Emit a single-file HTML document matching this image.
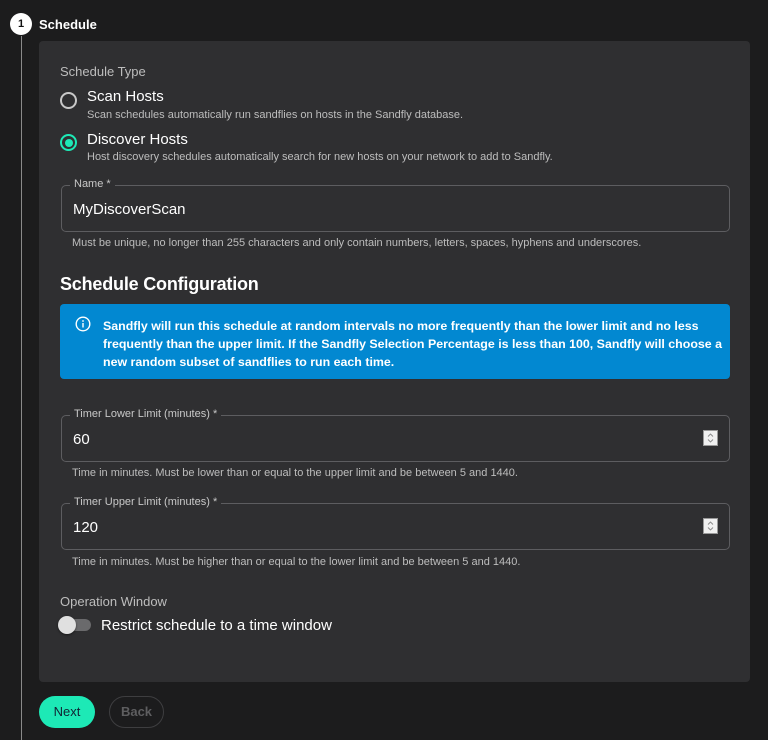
<!DOCTYPE html>
<html><head><meta charset="utf-8"><style>
*{margin:0;padding:0;box-sizing:border-box}
body{width:768px;height:740px;background:#1c1c1d;font-family:"Liberation Sans",sans-serif;color:#fff;position:relative;overflow:hidden}
.a{position:absolute;white-space:nowrap}
.lbl{color:#bdbdbd;font-size:13px}
.desc{color:#bdbdbd;font-size:11px}
.fld{position:absolute;left:61px;width:669px;border:1px solid #5d5d60;border-radius:5px}
.fl{position:absolute;left:8px;top:-8px;background:#2f2f31;padding:0 4px;font-size:11px;color:#c8c8c8}
.val{position:absolute;left:11px;font-size:15px;color:#fff}
.spin{position:absolute;right:11px;width:15px;height:16px;background:#f0f0f0;border:1px solid #999}
</style></head><body>
<div class="a" style="left:21px;top:36px;width:1px;height:704px;background:#8a8a8a"></div>
<div class="a" style="left:10px;top:13px;width:22px;height:22px;border-radius:50%;background:#fff;color:#111;font-size:11px;font-weight:bold;text-align:center;line-height:22px">1</div>
<div class="a" style="left:39px;top:17px;font-size:13px;font-weight:bold">Schedule</div>
<div class="a" style="left:39px;top:41px;width:711px;height:641px;background:#2f2f31;border-radius:4px"></div>
<div class="a lbl" style="left:60px;top:64px">Schedule Type</div>
<div class="a" style="left:60px;top:92px;width:17px;height:17px;border:2px solid #c8c8c8;border-radius:50%"></div>
<div class="a" style="left:87px;top:88px;font-size:15px">Scan Hosts</div>
<div class="a desc" style="left:87px;top:109px">Scan schedules automatically run sandflies on hosts in the Sandfly database.</div>
<div class="a" style="left:60px;top:134px;width:17px;height:17px;border:2px solid #1de9b6;border-radius:50%"><div style="position:absolute;left:2.5px;top:2.5px;width:8px;height:8px;border-radius:50%;background:#1de9b6"></div></div>
<div class="a" style="left:87px;top:131px;font-size:15px">Discover Hosts</div>
<div class="a desc" style="left:87px;top:151px">Host discovery schedules automatically search for new hosts on your network to add to Sandfly.</div>
<div class="fld" style="top:185px;height:47px"><span class="fl">Name *</span><span class="val" style="top:15px">MyDiscoverScan</span></div>
<div class="a desc" style="left:72px;top:237px">Must be unique, no longer than 255 characters and only contain numbers, letters, spaces, hyphens and underscores.</div>
<div class="a" style="left:60px;top:274px;font-size:18px;font-weight:bold;letter-spacing:-0.2px">Schedule Configuration</div>
<div class="a" style="left:60px;top:304px;width:670px;height:75px;background:#0288d1;border-radius:4px">
<svg class="a" style="left:15px;top:12px" width="16" height="16" viewBox="0 0 16 16"><circle cx="8" cy="8" r="6.8" fill="none" stroke="#fff" stroke-width="1.4"/><rect x="7.3" y="7" width="1.4" height="4.5" fill="#fff"/><circle cx="8" cy="5" r="0.9" fill="#fff"/></svg>
<div class="a" style="left:43px;top:13px;font-size:12.4px;font-weight:bold;line-height:18px;white-space:normal;width:622px">Sandfly will run this schedule at random intervals no more frequently than the lower limit and no less frequently than the upper limit. If the Sandfly Selection Percentage is less than 100, Sandfly will choose a new random subset of sandflies to run each time.</div></div>
<div class="fld" style="top:415px;height:47px"><span class="fl">Timer Lower Limit (minutes) *</span><span class="val" style="top:15px">60</span><div class="spin" style="top:14px"><svg width="13" height="14" viewBox="0 0 13 14"><path d="M4 5.5l2.5-2.5 2.5 2.5M4 8.5l2.5 2.5 2.5-2.5" fill="none" stroke="#888" stroke-width="0.9"/></svg></div></div>
<div class="a desc" style="left:72px;top:467px">Time in minutes. Must be lower than or equal to the upper limit and be between 5 and 1440.</div>
<div class="fld" style="top:503px;height:47px"><span class="fl">Timer Upper Limit (minutes) *</span><span class="val" style="top:15px">120</span><div class="spin" style="top:14px"><svg width="13" height="14" viewBox="0 0 13 14"><path d="M4 5.5l2.5-2.5 2.5 2.5M4 8.5l2.5 2.5 2.5-2.5" fill="none" stroke="#888" stroke-width="0.9"/></svg></div></div>
<div class="a desc" style="left:72px;top:556px">Time in minutes. Must be higher than or equal to the lower limit and be between 5 and 1440.</div>
<div class="a lbl" style="left:60px;top:594px">Operation Window</div>
<div class="a" style="left:62px;top:619px;width:29px;height:12px;border-radius:6px;background:#6a6a6c"></div>
<div class="a" style="left:58px;top:616px;width:18px;height:18px;border-radius:50%;background:#e0e0e0;box-shadow:0 1px 2px rgba(0,0,0,.5)"></div>
<div class="a" style="left:101px;top:617px;font-size:15px">Restrict schedule to a time window</div>
<div class="a" style="left:39px;top:696px;width:56px;height:32px;border-radius:16px;background:#1de9b6;color:#123;font-size:13px;text-align:center;line-height:32px">Next</div>
<div class="a" style="left:109px;top:696px;width:55px;height:32px;border-radius:16px;border:1px solid #3e3e40;color:#5e5e60;font-size:13px;font-weight:bold;text-align:center;line-height:30px">Back</div>
</body></html>
